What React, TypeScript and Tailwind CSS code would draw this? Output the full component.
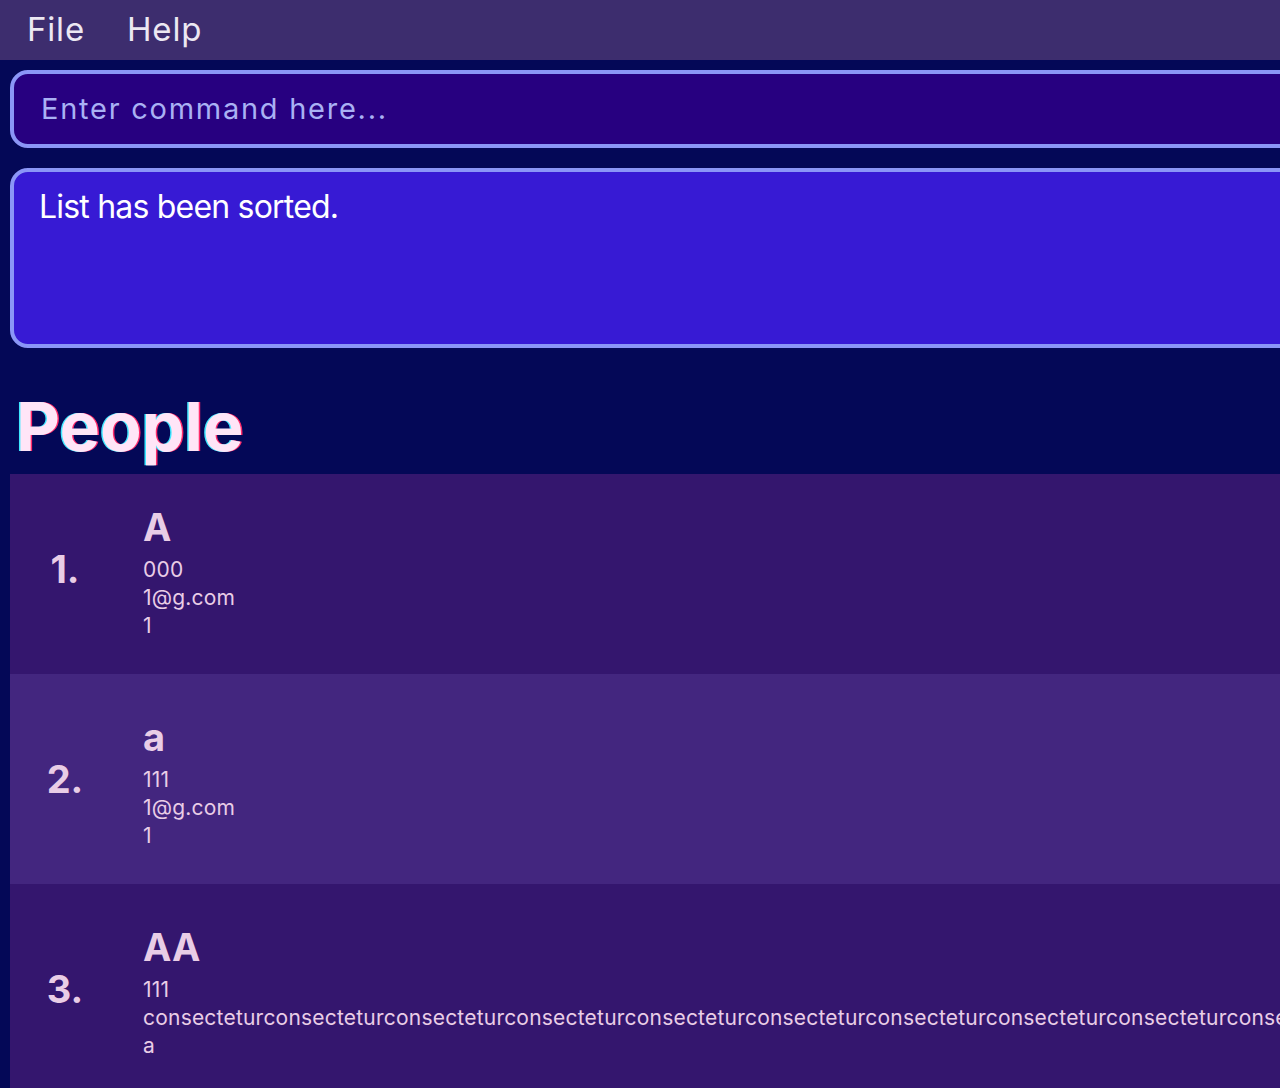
import React from "react";

const people = [
  { name: "A", phone: "000", email: "1@g.com", address: "1" },
  { name: "a", phone: "111", email: "1@g.com", address: "1" },
  {
    name: "AA",
    phone: "111",
    email: "consecteturconsecteturconsecteturconsecteturconsecteturconsecteturconsecteturconsecteturconsecteturconsectetur",
    address: "a",
  },
];

function PersonCard({ index, person }: { index: number; person: (typeof people)[number] }) {
  const bg = index % 2 === 0 ? "bg-[#34166e]" : "bg-[#43267f]";
  return (
    <div className={`flex h-[210px] w-[1600px] ${bg}`}>
      <div className="flex w-[110px] shrink-0 items-center justify-center text-[38px] font-bold leading-none text-[#e9cde6]">
        {index + 1}.
      </div>
      <div className="ml-[23px] flex flex-col pt-[41px]">
        <div className="text-[38px] font-bold leading-[44px] text-[#e9cde6]">{person.name}</div>
        <div className="mt-[7px] flex flex-col text-[21px] leading-[28px] tracking-[0.01em] text-[#e9cde6]">
          <span>{person.phone}</span>
          <span className="whitespace-nowrap">{person.email}</span>
          <span>{person.address}</span>
        </div>
      </div>
    </div>
  );
}

export default function App() {
  return (
    <div className="h-[1088px] w-[1280px] overflow-hidden bg-[#040857] font-['Inter',sans-serif]">
      {/* Menu bar */}
      <div className="flex h-[60px] items-center gap-[42px] bg-[#3d2d6e] pl-[27px] text-[33px] tracking-wide text-[#ece8f2]">
        <span>File</span>
        <span>Help</span>
      </div>

      <div className="flex flex-col pl-[10px]">
        {/* Command box */}
        <div className="mt-[10px] flex h-[78px] w-[1320px] items-center rounded-[18px] border-4 border-[#8b96f7] bg-[#270080] pl-[27px]">
          <span className="text-[29px] tracking-[0.06em] text-[#a9b1f4]">Enter command here...</span>
        </div>

        {/* Result box */}
        <div className="mt-[20px] h-[180px] w-[1320px] rounded-[18px] border-4 border-[#8b96f7] bg-[#371ad4] pl-[25px] pt-[11px]">
          <span className="text-[32px] tracking-tight text-white">List has been sorted.</span>
        </div>

        {/* People */}
        <h1 className="mt-[38px] pl-[6px] text-[68px] font-bold leading-[80px] text-[#ffe5f7] [text-shadow:-1.5px_0_#3ee8ff,1.5px_0_#ff2a6a]">
          People
        </h1>

        <div className="mt-[8px] overflow-hidden">
          <div className="-mt-[10px] flex flex-col">
            {people.map((p, i) => (
              <PersonCard key={i} index={i} person={p} />
            ))}
          </div>
        </div>
      </div>
    </div>
  );
}
